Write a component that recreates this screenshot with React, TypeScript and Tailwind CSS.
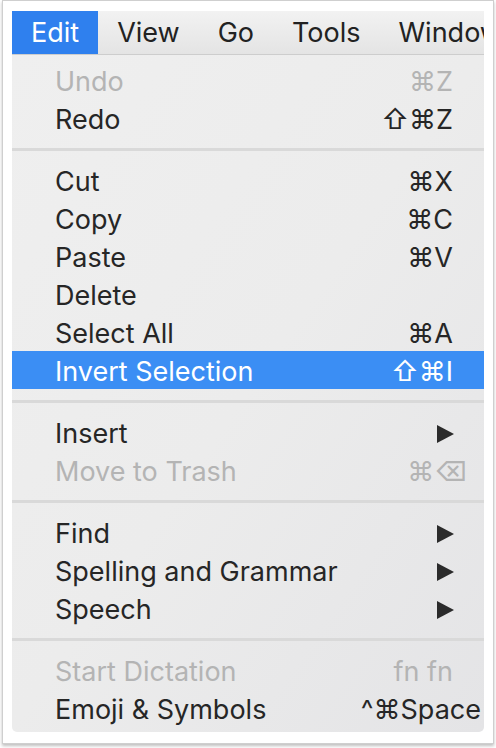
import React from "react";

type Item =
  | { kind: "sep" }
  | { kind: "item"; label: string; keys?: string; disabled?: boolean; active?: boolean; submenu?: boolean; shift?: number };

const items: Item[] = [
  { kind: "item", label: "Undo", keys: "⌘Z", disabled: true },
  { kind: "item", label: "Redo", keys: "⇧⌘Z" },
  { kind: "sep" },
  { kind: "item", label: "Cut", keys: "⌘X" },
  { kind: "item", label: "Copy", keys: "⌘C" },
  { kind: "item", label: "Paste", keys: "⌘V" },
  { kind: "item", label: "Delete" },
  { kind: "item", label: "Select All", keys: "⌘A" },
  { kind: "item", label: "Invert Selection", keys: "⇧⌘I", active: true },
  { kind: "sep" },
  { kind: "item", label: "Insert", submenu: true },
  { kind: "item", label: "Move to Trash", keys: "⌘⌫", disabled: true, shift: 1 },
  { kind: "sep" },
  { kind: "item", label: "Find", submenu: true },
  { kind: "item", label: "Spelling and Grammar", submenu: true },
  { kind: "item", label: "Speech", submenu: true },
  { kind: "sep" },
  { kind: "item", label: "Start Dictation", keys: "fn fn", disabled: true },
  { kind: "item", label: "Emoji & Symbols", keys: "^⌘Space", shift: 2 },
];

function Arrow() {
  return (
    <svg width="19" height="20" viewBox="0 0 19 20" className="mr-[-2px]">
      <polygon points="1,1 18,10 1,19" fill="#2b2b2b" />
    </svg>
  );
}

function Row({ item }: { item: Extract<Item, { kind: "item" }> }) {
  const color = item.active ? "text-white" : item.disabled ? "text-[#b4b4b4]" : "text-[#262626]";
  const bg = item.active ? "bg-[#3b8ef4]" : "";
  const margin = item.shift === 1 ? "mr-[-14px]" : item.shift === 2 ? "mr-[-28px] whitespace-nowrap" : "";
  return (
    <div className={`h-[38px] flex items-center justify-between pl-[43px] pr-[31px] pt-[3px] ${bg} ${color}`}>
      <span className="whitespace-nowrap">{item.label}</span>
      {item.submenu ? (
        <Arrow />
      ) : item.keys ? (
        <span className={`whitespace-nowrap ${margin}`}>{item.keys}</span>
      ) : null}
    </div>
  );
}

export default function App() {
  return (
    <div className="w-[496px] h-[748px] bg-white pl-[2px] font-['Inter','DejaVu_Sans',sans-serif] text-[27px] leading-none">
      <div className="w-[492px] h-[744px] border border-[#cfcfcf] bg-white pt-[10px] px-[9px] shadow-[0_2px_3px_rgba(0,0,0,0.25)]">
        <div className="w-[472px] rounded-b-[5px] overflow-hidden">
          {/* menu bar */}
          <div className="h-[44px] flex items-stretch bg-gradient-to-b from-[#f2f2f2] to-[#e4e4e4] border-b border-[#cdcdcd] text-[#222] whitespace-nowrap overflow-hidden">
            <div className="px-[19px] flex items-center bg-[#2f80ee] text-white">Edit</div>
            <div className="px-[19px] flex items-center">View</div>
            <div className="px-[19px] flex items-center">Go</div>
            <div className="px-[19px] flex items-center">Tools</div>
            <div className="px-[19px] flex items-center">Window</div>
          </div>
          {/* menu body */}
          <div className="bg-gradient-to-br from-[#efefef] via-[#ececec] to-[#e4e4e6] pt-[6px] pb-[5px]">
            {items.map((it, i) =>
              it.kind === "sep" ? (
                <div key={i} className="h-[24px] flex items-center">
                  <div className="w-full h-[3px] bg-[#d9d9d9]" />
                </div>
              ) : (
                <Row key={i} item={it} />
              )
            )}
          </div>
        </div>
      </div>
    </div>
  );
}
